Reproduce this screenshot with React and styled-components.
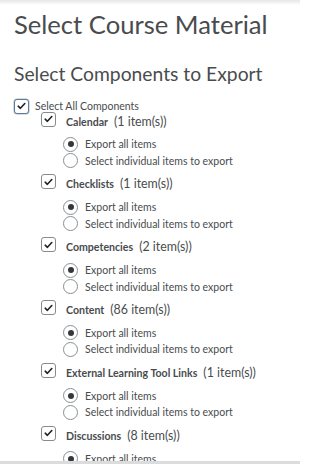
import React from "react";
import styled, { createGlobalStyle } from "styled-components";

const GlobalStyle = createGlobalStyle`
  html, body {
    margin: 0;
    padding: 0;
    background: #ffffff;
  }
  body {
    font-family: Lato, "Open Sans", sans-serif;
    color: #494c4e;
  }
`;

const Page = styled.div`
  position: relative;
  width: 300px;
  height: 464px;
  overflow: hidden;
  background: #fff;
`;

const TopShade = styled.div`
  height: 5px;
  background: linear-gradient(#e6e6e6, #ffffff);
`;

const Content = styled.div`
  padding: 0 0 0 14px;
`;

const Title = styled.h1`
  margin: 2px 0 0;
  font-size: 25.6px;
  font-weight: 400;
  line-height: 34px;
  color: #494c4e;
`;

const SubTitle = styled.h2`
  margin: 21px 0 0;
  font-size: 19.3px;
  font-weight: 400;
  line-height: 24px;
  color: #494c4e;
`;

const SelectAllRow = styled.label`
  display: flex;
  align-items: center;
  height: 18px;
  margin-top: 11px;
  gap: 6px;
  font-size: 10.5px;
  color: #494c4e;
`;

const Box = styled.span`
  box-sizing: border-box;
  width: 15px;
  height: 15px;
  flex: none;
  display: flex;
  align-items: center;
  justify-content: center;
  border-radius: 3px;
  background: #fff;
  border: ${(p) => (p.$focus ? "1.5px solid #5d7b98" : "1px solid #868b8f")};
  box-shadow: ${(p) => (p.$focus ? "0 0 0 0.5px #a9bccd" : "none")};
`;

const Tick = () => (
  <svg width="9" height="8" viewBox="0 0 9 8">
    <path d="M1.2 4.2 L3.4 6.3 L7.8 1.5" fill="none" stroke="#202122" strokeWidth="1.6" strokeLinecap="round" strokeLinejoin="round" />
  </svg>
);

const List = styled.div`
  display: flex;
  flex-direction: column;
  gap: 3.9px;
  margin-top: -5px;
  padding-left: 27px;
`;

const Block = styled.div`
  display: flex;
  flex-direction: column;
`;

const CheckRow = styled.label`
  display: flex;
  align-items: center;
  height: 18px;
  gap: 10px;
`;

const Name = styled.span`
  font-size: 10.6px;
  font-weight: 700;
  color: #494c4e;
`;

const Count = styled.span`
  font-size: 12.4px;
  font-weight: 400;
  color: #494c4e;
  margin-left: 6px;
`;

const Radios = styled.div`
  display: flex;
  flex-direction: column;
  margin-top: 8px;
  padding-left: 22px;
`;

const RadioRow = styled.label`
  display: flex;
  align-items: center;
  height: 16.5px;
  gap: 7px;
  font-size: 10.5px;
  color: #494c4e;
`;

const Circle = styled.span`
  box-sizing: border-box;
  width: 15px;
  height: 15px;
  flex: none;
  border-radius: 50%;
  border: 1px solid #8a8f93;
  background: #fff;
  display: flex;
  align-items: center;
  justify-content: center;

  &::after {
    content: "";
    display: ${(p) => (p.$on ? "block" : "none")};
    width: 6px;
    height: 6px;
    border-radius: 50%;
    background: #35383b;
  }
`;

const BottomBar = styled.div`
  position: absolute;
  left: 0;
  right: 0;
  bottom: 0;
  height: 3px;
  background: #dcdcdc;
`;

const components = [
  { name: "Calendar", count: 1 },
  { name: "Checklists", count: 1 },
  { name: "Competencies", count: 2 },
  { name: "Content", count: 86 },
  { name: "External Learning Tool Links", count: 1 },
  { name: "Discussions", count: 8 },
];

const App = () => (
  <Page>
    <GlobalStyle />
    <TopShade />
    <Content>
      <Title>Select Course Material</Title>
      <SubTitle>Select Components to Export</SubTitle>
      <SelectAllRow>
        <Box $focus>
          <Tick />
        </Box>
        Select All Components
      </SelectAllRow>
      <List>
        {components.map((c) => (
          <Block key={c.name}>
            <CheckRow>
              <Box>
                <Tick />
              </Box>
              <span>
                <Name>{c.name}</Name>
                <Count>({c.count} item(s))</Count>
              </span>
            </CheckRow>
            <Radios>
              <RadioRow>
                <Circle $on />
                Export all items
              </RadioRow>
              <RadioRow>
                <Circle />
                Select individual items to export
              </RadioRow>
            </Radios>
          </Block>
        ))}
      </List>
    </Content>
    <BottomBar />
  </Page>
);

export default App;
